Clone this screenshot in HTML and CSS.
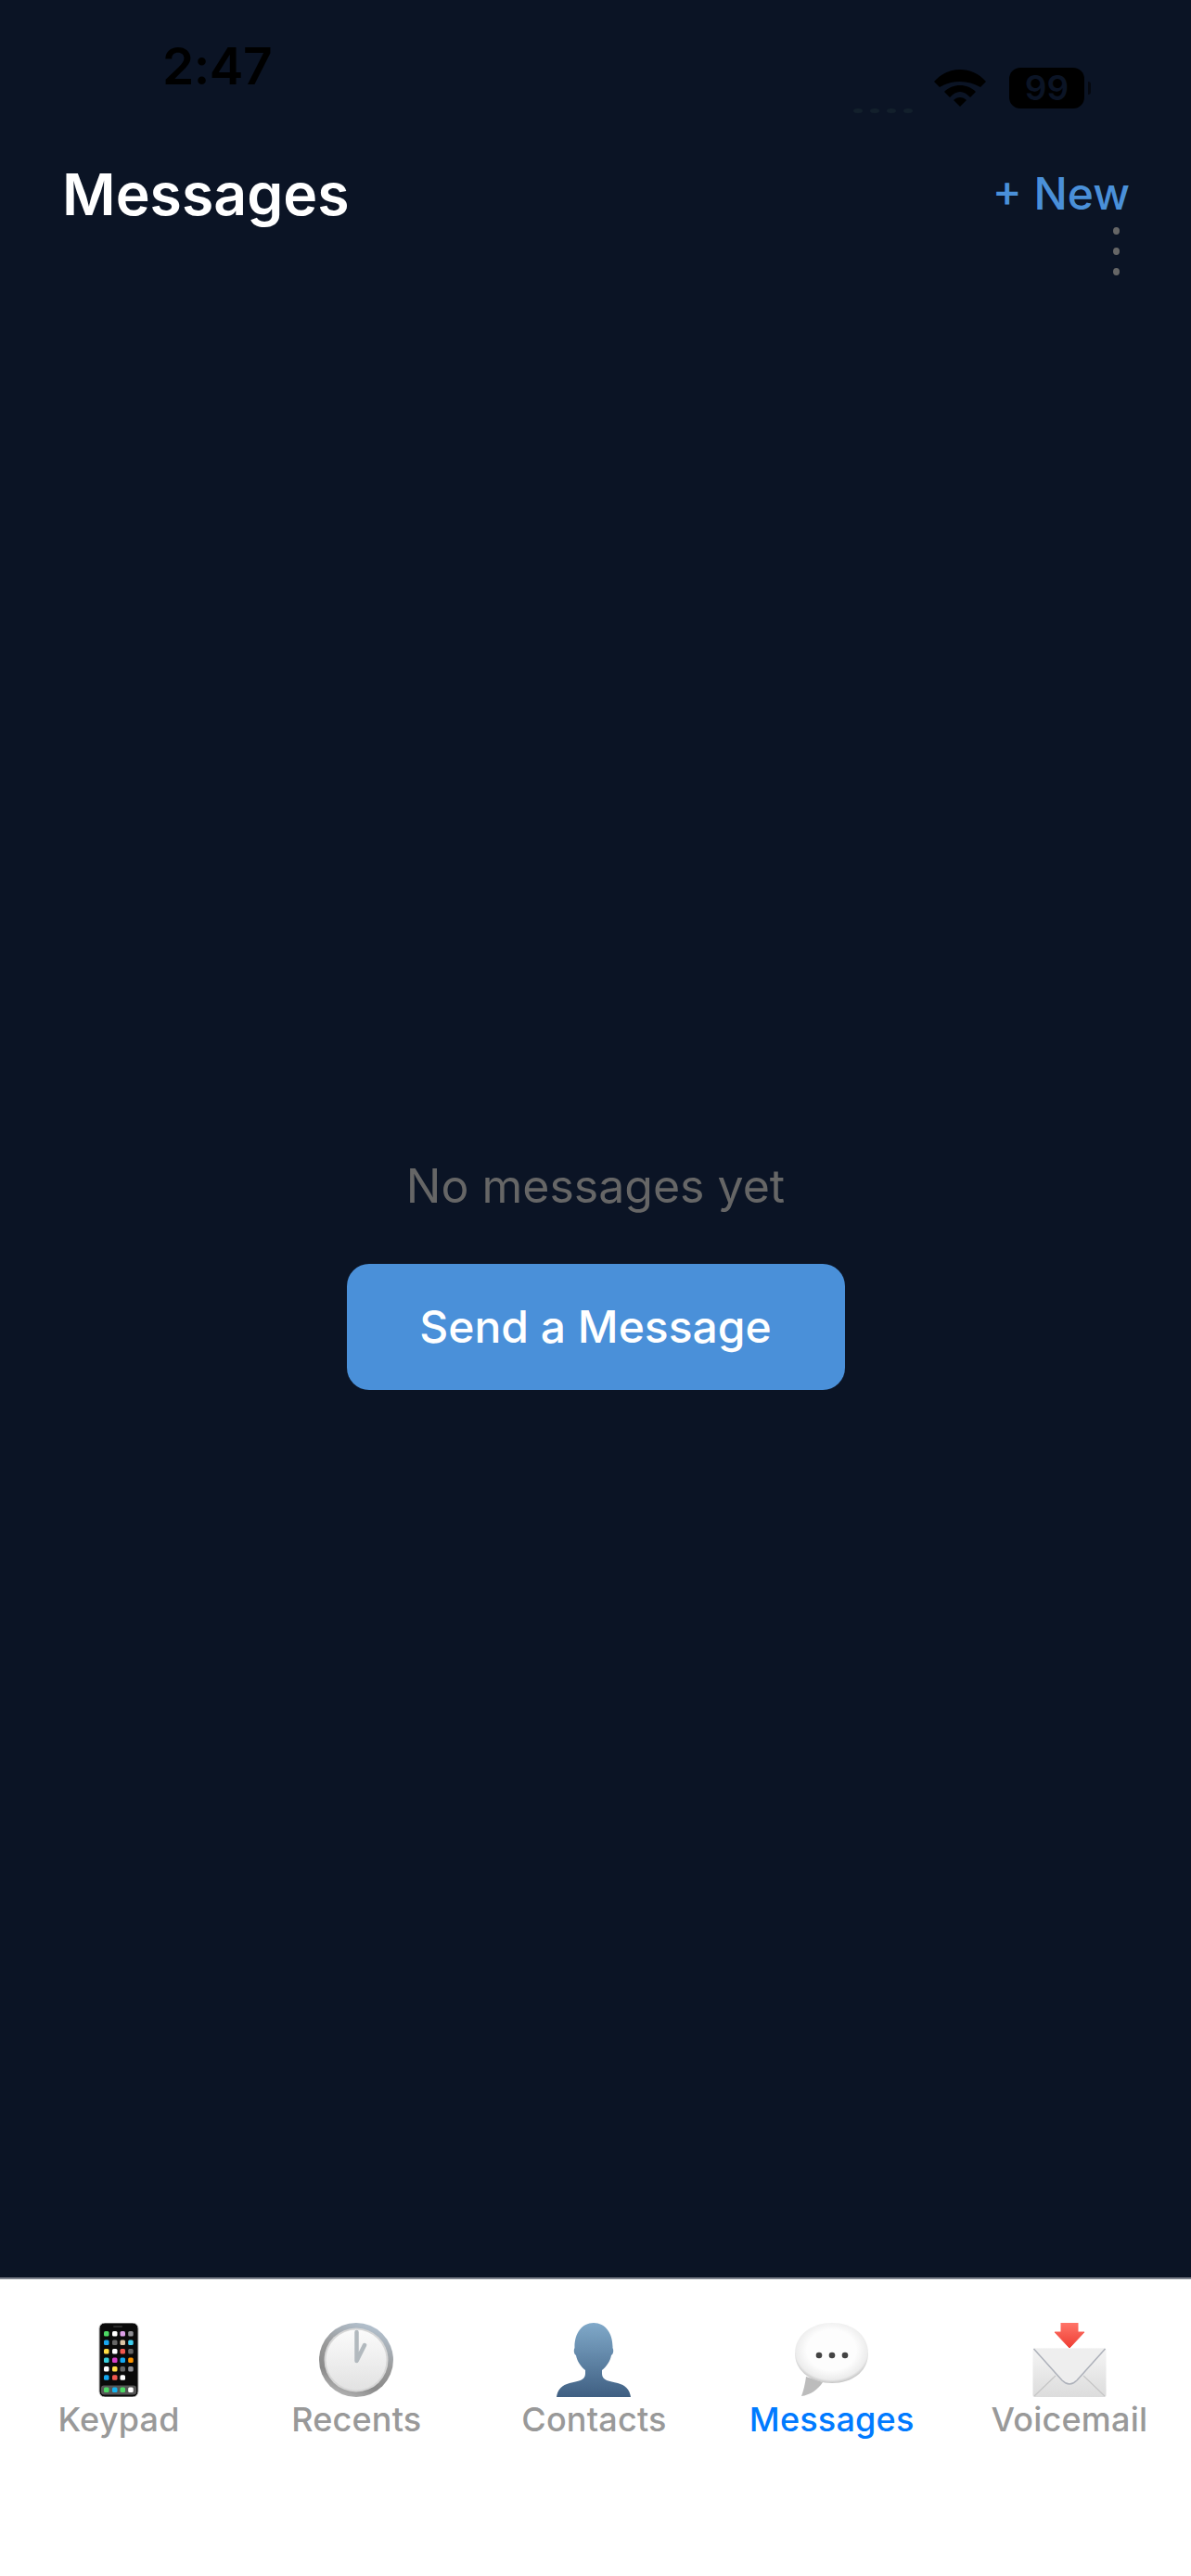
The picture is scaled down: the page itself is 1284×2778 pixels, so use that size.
FILE: index.html
```html
<!DOCTYPE html>
<html lang="en">
<head>
    <meta charset="UTF-8">
    <meta name="viewport" content="width=device-width, initial-scale=1.0">
    <title>Messages</title>
    <link rel="stylesheet" href="styles.css">
</head>
<body>
    <div class="screen">
        <div class="status-bar">
            <span class="time">2:47</span>
            <div class="status-icons">
                <div class="signal"><i></i><i></i><i></i><i></i></div>
                <svg class="wifi" width="56" height="40" viewBox="0 0 56 40">
                    <path d="M0 13 C15 -4.300 41 -4.300 56 13 L50 19 C37 11 19 11 6 19 Z" fill="#000"/>
                    <path d="M11 24 C20 14.700 36 14.700 45 24 L39 30 C32 22 24 22 17 30 Z" fill="#000"/>
                    <path d="M21 33 C25 29 31 29 35 33 L28 40 Z" fill="#000"/>
                </svg>
                <div class="battery"><span class="battery-level">99</span><i class="battery-nub"></i></div>
            </div>
        </div>

        <header class="header">
            <h1>Messages</h1>
            <div class="header-actions">
                <span class="new-link">+ New</span>
                <div class="more-dots"><i></i><i></i><i></i></div>
            </div>
        </header>

        <main class="empty">
            <p class="empty-text">No messages yet</p>
            <button class="send-btn" type="button">Send a Message</button>
        </main>

        <nav class="tabs">
            <div class="tab">
                <svg class="tab-icon" width="80" height="80" viewBox="0 0 80 80">
                    <rect x="19" y="0" width="42" height="80" rx="6" fill="#0a0a0a" stroke="#b9b9b9" stroke-width="1"/>
                    <rect x="34" y="3" width="10" height="2" rx="1" fill="#2c2c2c"/>
                    <g transform="translate(19 0)">
                        <rect x="5" y="9" width="5.500" height="5.500" rx="1.500" fill="#4cd964"/>
                        <rect x="14" y="9" width="5.500" height="5.500" rx="1.500" fill="#fff"/>
                        <rect x="22.500" y="9" width="5.500" height="5.500" rx="1.500" fill="#dda0e8"/>
                        <rect x="31.200" y="9" width="5.500" height="5.500" rx="1.500" fill="#8e8e93"/>
                        <rect x="5" y="18.500" width="5.500" height="5.500" rx="1.500" fill="#1aa7f0"/>
                        <rect x="14" y="18.500" width="5.500" height="5.500" rx="1.500" fill="#666"/>
                        <rect x="22.500" y="18.500" width="5.500" height="5.500" rx="1.500" fill="#d9c3a5"/>
                        <rect x="31.200" y="18.500" width="5.500" height="5.500" rx="1.500" fill="#3fd0f0"/>
                        <rect x="5" y="28" width="5.500" height="5.500" rx="1.500" fill="#ffdd44"/>
                        <rect x="14" y="28" width="5.500" height="5.500" rx="1.500" fill="#fff"/>
                        <rect x="22.500" y="28" width="5.500" height="5.500" rx="1.500" fill="#f0584e"/>
                        <rect x="31.200" y="28" width="5.500" height="5.500" rx="1.500" fill="#666"/>
                        <rect x="5" y="37.500" width="5.500" height="5.500" rx="1.500" fill="#38d0dc"/>
                        <rect x="14" y="37.500" width="5.500" height="5.500" rx="1.500" fill="#d63fc8"/>
                        <rect x="22.500" y="37.500" width="5.500" height="5.500" rx="1.500" fill="#14a8f0"/>
                        <rect x="31.200" y="37.500" width="5.500" height="5.500" rx="1.500" fill="#ff9500"/>
                        <rect x="5" y="47" width="5.500" height="5.500" rx="1.500" fill="#fff"/>
                        <rect x="14" y="47" width="5.500" height="5.500" rx="1.500" fill="#ffdd44"/>
                        <rect x="22.500" y="47" width="5.500" height="5.500" rx="1.500" fill="#666"/>
                        <rect x="31.200" y="47" width="5.500" height="5.500" rx="1.500" fill="#8e8e93"/>
                        <rect x="5" y="56.300" width="5.500" height="5.500" rx="1.500" fill="#14a8f0"/>
                        <rect x="14" y="56.300" width="5.500" height="5.500" rx="1.500" fill="#f0584e"/>
                        <rect x="22.500" y="56.300" width="5.500" height="5.500" rx="1.500" fill="#fff"/>
                        <rect x="2" y="67.500" width="38" height="10" rx="3" fill="#555"/>
                        <rect x="5" y="69.500" width="5.500" height="5.500" rx="1.500" fill="#4cd964"/>
                        <rect x="14" y="69.500" width="5.500" height="5.500" rx="1.500" fill="#14b4f0"/>
                        <rect x="22.500" y="69.500" width="5.500" height="5.500" rx="1.500" fill="#4cd964"/>
                        <rect x="31.200" y="69.500" width="5.500" height="5.500" rx="1.500" fill="#fff"/>
                    </g>
                </svg>
                <span class="tab-label">Keypad</span>
            </div>
            <div class="tab">
                <svg class="tab-icon" width="80" height="80" viewBox="0 0 80 80">
                    <defs>
                        <linearGradient id="clockRing" x1="0.700" y1="0" x2="0.300" y2="1">
                            <stop offset="0" stop-color="#b4c3d1"/>
                            <stop offset="0.450" stop-color="#9a9a9a"/>
                            <stop offset="0.750" stop-color="#8a8a8a"/>
                            <stop offset="1" stop-color="#b5b5b5"/>
                        </linearGradient>
                        <linearGradient id="clockFace" x1="0" y1="0" x2="0" y2="1">
                            <stop offset="0" stop-color="#fbfbfb"/>
                            <stop offset="1" stop-color="#e2e2e2"/>
                        </linearGradient>
                    </defs>
                    <circle cx="40" cy="40" r="40" fill="url(#clockRing)"/>
                    <circle cx="40" cy="40" r="34.500" fill="#d6d6d6"/>
                    <circle cx="40" cy="40" r="32.500" fill="url(#clockFace)"/>
                    <path d="M40.500 10 V41 L49 24" fill="none" stroke="#b2b9be" stroke-width="4.500" stroke-linecap="round" stroke-linejoin="round"/>
                </svg>
                <span class="tab-label">Recents</span>
            </div>
            <div class="tab">
                <svg class="tab-icon" width="80" height="80" viewBox="0 0 80 80">
                    <defs>
                        <linearGradient id="personFill" x1="0" y1="0" x2="0" y2="1">
                            <stop offset="0" stop-color="#80a9c9"/>
                            <stop offset="1" stop-color="#3f5f82"/>
                        </linearGradient>
                    </defs>
                    <path d="M0 80 C1 72 6 67 14 65 C23 63 31 62 31 55 L31 51 C26 47 22 41 21 35 C19 34 18 30 19.500 27 C19 12 27 0 40 0 C53 0 61 12 60.500 27 C62 30 61 34 59 35 C58 41 54 47 49 51 L49 55 C49 62 57 63 66 65 C74 67 79 72 80 80 Z" fill="url(#personFill)"/>
                </svg>
                <span class="tab-label">Contacts</span>
            </div>
            <div class="tab tab-active">
                <svg class="tab-icon" width="80" height="80" viewBox="0 0 80 80">
                    <defs>
                        <radialGradient id="bubbleFill" cx="0.500" cy="0.450" r="0.560">
                            <stop offset="0.600" stop-color="#fdfdfd"/>
                            <stop offset="0.880" stop-color="#ececec"/>
                            <stop offset="1" stop-color="#bdbdbd"/>
                        </radialGradient>
                    </defs>
                    <path d="M12 58 C11 66 9 74 7 79 C16 78 25 72 30 64 Z" fill="#bcbcbc"/>
                    <path d="M40 0 C62 0 79 13 79 33 C79 52 62 65 40 65 C18 65 0 52 0 33 C0 13 18 0 40 0 Z" fill="url(#bubbleFill)"/>
                    <circle cx="26" cy="35" r="3.300" fill="#444"/>
                    <circle cx="40" cy="35" r="3.300" fill="#444"/>
                    <circle cx="54" cy="35" r="3.300" fill="#444"/>
                </svg>
                <span class="tab-label">Messages</span>
            </div>
            <div class="tab">
                <svg class="tab-icon" width="80" height="80" viewBox="0 0 80 80">
                    <defs>
                        <linearGradient id="envelopeFill" x1="0" y1="0" x2="0" y2="1">
                            <stop offset="0" stop-color="#f5f5f5"/>
                            <stop offset="1" stop-color="#dcdcdc"/>
                        </linearGradient>
                        <linearGradient id="arrowFill" x1="0" y1="0" x2="0" y2="1">
                            <stop offset="0" stop-color="#ff7468"/>
                            <stop offset="1" stop-color="#ee3d33"/>
                        </linearGradient>
                    </defs>
                    <rect x="0.500" y="27" width="79" height="53" rx="2" fill="url(#envelopeFill)"/>
                    <path d="M2 79 L25 57 M78 79 L55 57" fill="none" stroke="#c6c6c6" stroke-width="1.200"/>
                    <path d="M1.500 28 L32 62 Q40 70 48 62 L78.500 28" fill="#eeeeee" stroke="#adb1ba" stroke-width="1.500"/>
                    <path d="M31 0 H49 V10 H56 L40 27 L24 10 H31 Z" fill="url(#arrowFill)" stroke="url(#arrowFill)" stroke-width="1" stroke-linejoin="round"/>
                </svg>
                <span class="tab-label">Voicemail</span>
            </div>
        </nav>
    </div>
</body>
</html>
```

FILE: styles.css
```css
* {
    box-sizing: border-box;
}

body {
    margin: 0;
    padding: 0;
    background: #0b1425;
    font-family: Inter, "Liberation Sans", sans-serif;
}

.screen {
    height: 2778px;
    display: flex;
    flex-direction: column;
    background: #0b1425;
}

.status-bar {
    height: 170px;
    padding: 41px 115px 0 175px;
    display: flex;
    justify-content: space-between;
    align-items: flex-start;
    flex-shrink: 0;
}

.time {
    font-size: 55px;
    line-height: 60px;
    font-weight: 600;
    letter-spacing: -0.5px;
    color: #000;
}

.status-icons {
    margin-top: 32px;
    height: 49px;
    display: flex;
    align-items: flex-start;
}

.signal {
    align-self: flex-end;
    display: flex;
    gap: 8px;
    margin-right: 23px;
}

.signal i {
    display: block;
    width: 10px;
    height: 5px;
    border-radius: 50%;
    background: #13202c;
}

.wifi {
    margin-top: 2px;
    margin-right: 25px;
}

.battery {
    position: relative;
    width: 81px;
    height: 44px;
    border-radius: 12px;
    background: #000;
    display: flex;
    align-items: center;
    justify-content: center;
}

.battery-level {
    font-size: 37px;
    line-height: 44px;
    font-weight: 600;
    color: #0b1425;
}

.battery-nub {
    position: absolute;
    right: -7px;
    top: 15px;
    width: 3px;
    height: 14px;
    border-radius: 0 4px 4px 0;
    background: #05080f;
}

.header {
    padding: 0 66px 0 67px;
    display: flex;
    justify-content: space-between;
    align-items: flex-start;
    flex-shrink: 0;
}

.header h1 {
    margin: 0;
    font-size: 62.5px;
    line-height: 78px;
    font-weight: 600;
    color: #fff;
}

.header-actions {
    display: flex;
    flex-direction: column;
    align-items: flex-end;
}

.new-link {
    margin-top: 4px;
    font-size: 48px;
    line-height: 70px;
    font-weight: 500;
    color: #4a90d9;
}

.more-dots {
    display: flex;
    flex-direction: column;
    gap: 14px;
    margin-top: 1px;
    margin-right: 11px;
}

.more-dots i {
    display: block;
    width: 7px;
    height: 8px;
    border-radius: 50%;
    background: #666;
}

.empty {
    flex: 1;
    display: flex;
    flex-direction: column;
    align-items: center;
    justify-content: center;
    padding-bottom: 6px;
}

.empty-text {
    margin: 0 0 54px;
    font-size: 50px;
    line-height: 60px;
    color: #666;
}

.send-btn {
    width: 537px;
    height: 136px;
    padding: 0;
    border: none;
    border-radius: 24px;
    background: #4a90d9;
    color: #fff;
    font-family: inherit;
    font-size: 48px;
    font-weight: 500;
}

.tabs {
    height: 322px;
    padding: 47px 3px 0 0;
    border-top: 2px solid #7d828c;
    background: #fff;
    display: grid;
    grid-template-columns: repeat(5, 1fr);
    flex-shrink: 0;
}

.tab {
    display: flex;
    flex-direction: column;
    align-items: center;
}

.tab-icon {
    display: block;
}

.tab-label {
    margin-top: 4px;
    font-size: 36px;
    line-height: 40px;
    letter-spacing: 0.2px;
    font-weight: 450;
    color: #999;
}

.tab-active .tab-label {
    color: #007aff;
}
```
